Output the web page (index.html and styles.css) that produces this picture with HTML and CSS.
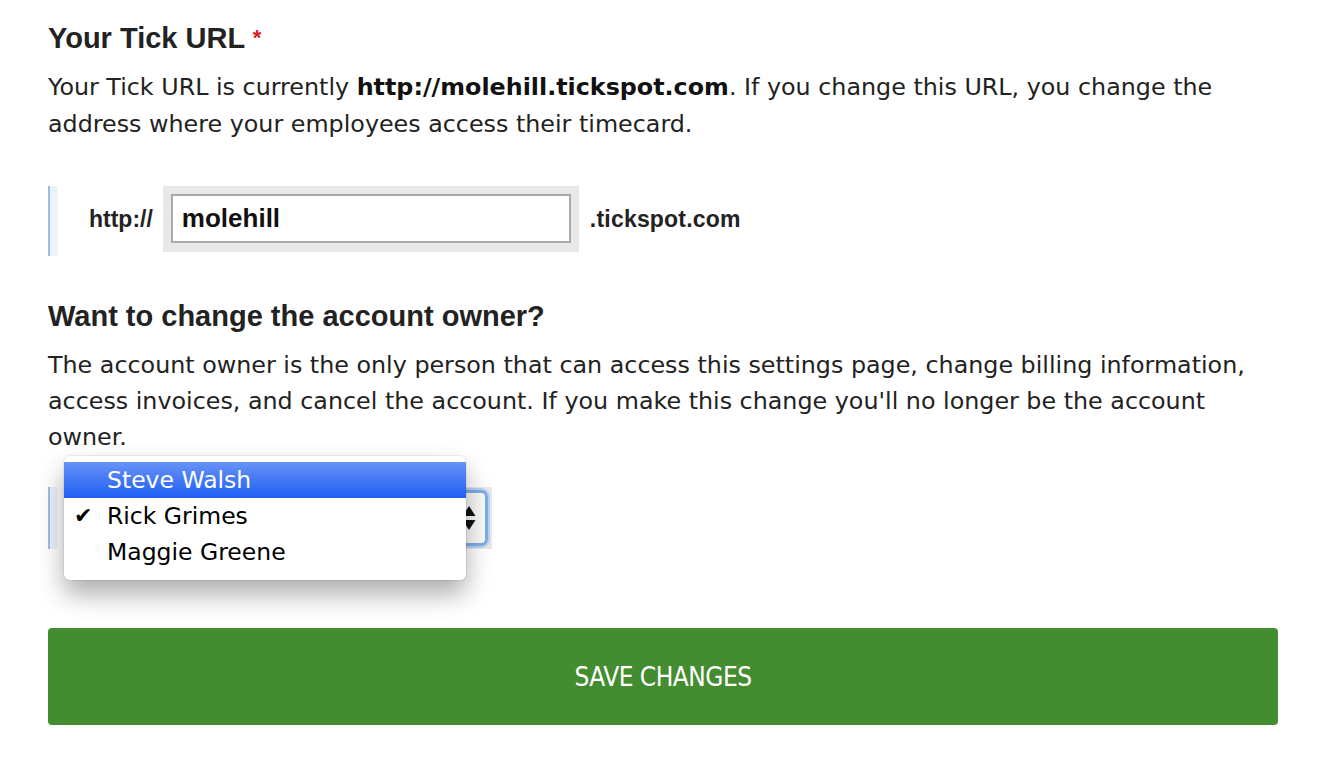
FILE: index.html
```html
<!DOCTYPE html>
<html lang="en">
<head>
    <meta charset="UTF-8">
    <title>Account settings</title>
    <link rel="stylesheet" href="styles.css">
</head>
<body>
    <div class="settings">
        <h2 class="field-title">Your Tick URL <span class="required">*</span></h2>
        <p class="hint">Your Tick URL is currently <strong>http://molehill.tickspot.com</strong>. If you change this URL, you change the address where your employees access their timecard.</p>
        <div class="field-row">
            <label class="prefix" for="subdomain">http://</label>
            <span class="input-box">
                <input type="text" id="subdomain" class="text-input" value="molehill">
            </span>
            <span class="suffix">.tickspot.com</span>
        </div>

        <h2 class="field-title">Want to change the account owner?</h2>
        <p class="hint hint-tight">The account owner is the only person that can access this settings page, change billing information, access invoices, and cancel the account. If you make this change you'll no longer be the account owner.</p>
        <div class="field-row owner-row">
            <span class="input-box select-box">
                <span class="fake-select">
                    <span class="fake-select-value">Rick Grimes</span>
                    <span class="arrows">
                        <svg width="14" height="28" viewBox="0 0 14 28">
                            <path d="M7 2 L13.5 12 L0.5 12 Z" fill="#111"/>
                            <path d="M7 26 L13.5 16 L0.5 16 Z" fill="#111"/>
                        </svg>
                    </span>
                </span>
            </span>
            <ul class="select-menu">
                <li class="active">Steve Walsh</li>
                <li class="checked">Rick Grimes</li>
                <li>Maggie Greene</li>
            </ul>
        </div>

        <button class="save-button">SAVE CHANGES</button>
    </div>
</body>
</html>
```

FILE: styles.css
```css
body {
    margin: 0;
    background-color: #fff;
    color: #222;
    font-family: "DejaVu Sans", Verdana, sans-serif;
}
.settings {
    width: 1230px;
    padding: 20px 48px 40px;
}
.field-title {
    font-family: "Liberation Sans", Arial, sans-serif;
    font-size: 29px;
    font-weight: bold;
    line-height: 36px;
    margin: 0 0 13px;
    color: #222;
}
.required {
    color: #e0191b;
    font-size: 22px;
    vertical-align: top;
}
.hint {
    font-size: 23.8px;
    line-height: 36.5px;
    margin: 0 0 44px;
}
.hint-tight {
    line-height: 36px;
    margin-bottom: 32px;
}
.hint strong {
    color: #111;
}
.field-row {
    display: flex;
    align-items: center;
    height: 70px;
    border-left: 2px solid #9bbde6;
    background: linear-gradient(to right, #eaf2fd 0, #eaf2fd 7px, #fff 8px);
    margin-bottom: 42px;
}
.prefix,
.suffix {
    font-family: "Liberation Sans", Arial, sans-serif;
    font-weight: bold;
    font-size: 23px;
    color: #222;
}
.prefix {
    margin-left: 39px;
    margin-right: 10px;
    margin-top: -4px;
}
.suffix {
    margin-left: 11px;
    margin-top: -4px;
    letter-spacing: 0.2px;
}
.input-box {
    display: block;
    align-self: flex-start;
    background-color: #e8e8e8;
    padding: 8px 8px 9px;
}
.text-input {
    display: block;
    box-sizing: border-box;
    width: 400px;
    height: 49px;
    border: 2px solid #aaa;
    padding: 0 9px;
    font-family: "Liberation Sans", Arial, sans-serif;
    font-weight: bold;
    font-size: 26px;
    color: #111;
    outline: none;
}
.owner-row {
    position: relative;
    height: 62px;
    margin-bottom: 79px;
}
.select-box {
    margin-left: 28px;
    padding: 3px 4px 3px 8px;
}
.fake-select {
    display: flex;
    align-items: center;
    justify-content: space-between;
    box-sizing: border-box;
    width: 402px;
    height: 56px;
    border: 3px solid #7eaee6;
    border-radius: 7px;
    box-shadow: 0 0 0 2px #b8d3f2;
    background: #fafafa;
    padding: 0 9px 0 30px;
    font-size: 23px;
}
.arrows {
    display: flex;
}
.select-menu {
    position: absolute;
    left: 14px;
    top: -31px;
    width: 402px;
    margin: 0;
    padding: 6px 0 10px;
    list-style: none;
    background: #fff;
    border-radius: 6px;
    box-shadow: 0 0 0 1px rgba(0, 0, 0, 0.06), 0 14px 26px rgba(0, 0, 0, 0.33);
}
.select-menu li {
    position: relative;
    height: 36px;
    line-height: 36px;
    padding-left: 43px;
    font-size: 23.5px;
    color: #000;
}
.select-menu li.active {
    color: #fff;
    background: linear-gradient(#6893f6, #1f5ef2);
}
.select-menu li.checked::before {
    content: "\2714";
    position: absolute;
    left: 10px;
    font-size: 22px;
}
.save-button {
    display: block;
    width: 1230px;
    height: 97px;
    border: none;
    border-radius: 4px;
    background-color: #438c2f;
    color: #fff;
    font-family: "DejaVu Sans Condensed", "DejaVu Sans", sans-serif;
    font-stretch: condensed;
    font-size: 26px;
    letter-spacing: -0.5px;
    cursor: pointer;
}
```
